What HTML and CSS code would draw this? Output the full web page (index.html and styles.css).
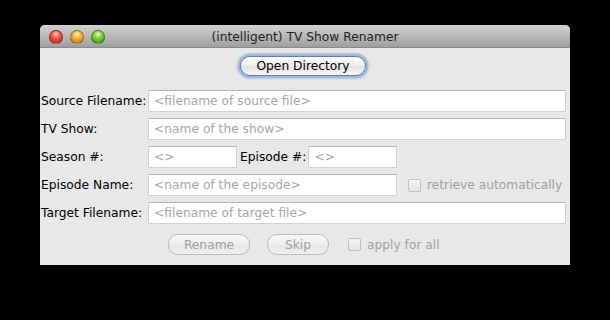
FILE: index.html
```html
<!DOCTYPE html>
<html>
<head>
  <title>(intelligent) TV Show Renamer</title>
  <meta charset="UTF-8">
  <link rel="stylesheet" href="styles.css">
</head>
<body>
  <div class="window">
    <div class="titlebar">
      <div class="lights">
        <span class="light red"></span>
        <span class="light yellow"></span>
        <span class="light green"></span>
      </div>
      <div class="title">(intelligent) TV Show Renamer</div>
      <div></div>
    </div>

    <div class="content">
      <div class="top-row">
        <button class="btn btn-default">Open Directory</button>
      </div>

      <div class="form">
        <div class="row">
          <label class="lbl">Source Filename:</label>
          <input class="field grow" placeholder="<filename of source file>">
        </div>
        <div class="row">
          <label class="lbl">TV Show:</label>
          <input class="field grow" placeholder="<name of the show>">
        </div>
        <div class="row">
          <label class="lbl">Season #:</label>
          <input class="field small" placeholder="<>">
          <label class="lbl-inline">Episode #:</label>
          <input class="field small" placeholder="<>">
        </div>
        <div class="row">
          <label class="lbl">Episode Name:</label>
          <input class="field medium" placeholder="<name of the episode>">
          <label class="check check-retrieve"><span class="box"></span>retrieve automatically</label>
        </div>
        <div class="row">
          <label class="lbl">Target Filename:</label>
          <input class="field grow" placeholder="<filename of target file>">
        </div>
      </div>

      <div class="actions">
        <button class="btn btn-rename" disabled>Rename</button>
        <button class="btn btn-skip" disabled>Skip</button>
        <label class="check"><span class="box"></span>apply for all</label>
      </div>
    </div>
  </div>
</body>
</html>
```

FILE: styles.css
```css
body {
  margin: 0;
  background-color: #000;
  font-family: "DejaVu Sans", sans-serif;
  font-size: 12.25px;
  color: #000;
}
.window {
  margin: 25px 0 0 40px;
  width: 530px;
  height: 240px;
  background-color: #e8e8e8;
  border-radius: 5px 5px 0 0;
  overflow: hidden;
}
.titlebar {
  height: 22px;
  display: grid;
  grid-template-columns: 1fr auto 1fr;
  align-items: center;
  background: linear-gradient(#d2d2d2, #b8b8b8 50%, #9f9f9f);
  border-bottom: 1px solid #8a8a8a;
}
.lights {
  display: flex;
  gap: 7px;
  padding-left: 9px;
  padding-top: 1px;
}
.light {
  width: 14px;
  height: 14px;
  border-radius: 50%;
  box-sizing: border-box;
  border: 1px solid rgba(0, 0, 0, 0.3);
}
.red {
  background: radial-gradient(circle at 50% 28%, #ffd0c8 0, #f0554a 40%, #b81d14 100%);
}
.yellow {
  background: radial-gradient(circle at 50% 28%, #fff4c4 0, #f6ae3c 40%, #c0700e 100%);
}
.green {
  background: radial-gradient(circle at 50% 28%, #e6ffc4 0, #7fcc3e 40%, #398a10 100%);
}
.title {
  font-size: 12.25px;
  color: #222;
  padding-top: 1px;
}
.content {
  padding: 8px 4px 0 0;
}
.top-row {
  display: flex;
  justify-content: center;
  margin-bottom: 14px;
}
.btn {
  font-family: inherit;
  font-size: 12.25px;
  height: 20px;
  padding: 0 14px;
  border-radius: 10px;
  border: 1px solid #9a9a9a;
  background: linear-gradient(#ffffff, #eeeeee 50%, #e2e2e2 51%, #f6f6f6);
  color: #000;
}
.btn-default {
  width: 126px;
  border-color: #5f7fae;
  box-shadow: 0 0 0 2px #9dbbe0, 0 0 3px 2px #7ea2d2;
}
.btn:disabled {
  color: #a0a0a0;
  border-color: #bcbcbc;
  background: linear-gradient(#f8f8f8, #eeeeee 50%, #e6e6e6 51%, #f0f0f0);
}
.btn-rename {
  width: 82px;
  height: 21px;
}
.btn-skip {
  width: 62px;
  height: 21px;
}
.form {
  display: flex;
  flex-direction: column;
  gap: 6px;
}
.row {
  display: flex;
  align-items: center;
  height: 22px;
}
.lbl {
  width: 108px;
  padding-left: 1px;
  box-sizing: border-box;
}
.lbl-inline {
  padding: 0 2px 0 3px;
}
.field {
  height: 22px;
  box-sizing: border-box;
  border: 1px solid #d2d2d2;
  border-top-color: #b4b4b4;
  background: #fff;
  font-family: inherit;
  font-size: 12.25px;
  padding: 0 5px;
  margin: 0;
}
.field::placeholder {
  color: #a6a6a6;
}
.grow {
  flex: 1;
}
.small {
  width: 89px;
}
.medium {
  width: 249px;
}
.check {
  display: flex;
  align-items: center;
  gap: 6px;
  color: #a2a2a2;
}
.check-retrieve {
  margin-left: 11px;
}
.box {
  width: 13px;
  height: 13px;
  box-sizing: border-box;
  border: 1px solid #c2c2c2;
  border-radius: 2px;
  background: linear-gradient(#f4f4f4, #e4e4e4);
}
.actions {
  display: flex;
  align-items: center;
  margin: 10px 0 0 128px;
  gap: 17px;
}
.actions .check {
  margin-left: 2px;
}
```
